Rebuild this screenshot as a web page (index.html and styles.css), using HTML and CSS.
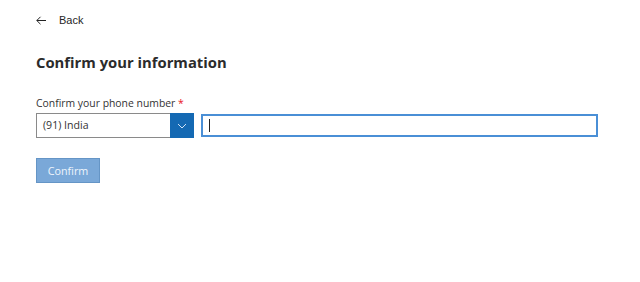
FILE: index.html
```html
<!DOCTYPE html>
<html>
<head>
<meta charset="utf-8">
<link rel="stylesheet" href="styles.css">
</head>
<body>
<div class="page">
  <div class="back">
    <svg class="back-icon" width="10" height="9" viewBox="0 0 10 9"><path d="M4.5 0.8 L0.8 4.5 L4.5 8.2 M0.8 4.5 H10" fill="none" stroke="#222" stroke-width="1"/></svg>
    <span class="back-text">Back</span>
  </div>
  <h1 class="title">Confirm your information</h1>
  <div class="label">Confirm your phone number <span class="req">*</span></div>
  <div class="row">
    <div class="select">
      <span class="select-text">(91) India</span>
      <span class="select-btn"><svg width="10" height="6" viewBox="0 0 10 6"><path d="M1 1 L5 5 L9 1" fill="none" stroke="#cfe2f5" stroke-width="1"/></svg></span>
    </div>
    <div class="input"><span class="caret"></span></div>
  </div>
  <button class="confirm">Confirm</button>
</div>
</body>
</html>
```

FILE: styles.css
```css
html, body { margin: 0; padding: 0; background: #fff; }
body { font-family: "Open Sans", "Noto Sans", sans-serif; color: #262626; }
.page { padding: 12px 36px 0 36px; }
.back { display: flex; align-items: center; height: 16px; }
.back-icon { margin-right: 13px; }
.back-text { font-family: "Liberation Sans", Arial, sans-serif; font-size: 11px; color: #262626; }
.title { margin: 23px 0 0 0; font-size: 14.8px; font-weight: 700; line-height: 22px; color: #2b2b2b; }
.label { margin-top: 22px; font-size: 10.4px; line-height: 16px; color: #333; }
.req { color: #e81123; }
.row { display: flex; align-items: center; margin-top: 2px; height: 25px; }
.select { width: 158px; height: 25px; box-sizing: border-box; border: 1px solid #8a8a8a; display: flex; justify-content: space-between; align-items: stretch; }
.select-text { font-size: 10.6px; line-height: 23px; padding-left: 6px; color: #333; }
.select-btn { width: 24px; background: #1469b3; display: flex; align-items: center; justify-content: center; margin: -1px -1px -1px 0; }
.input { margin-left: 7px; width: 397px; height: 23px; box-sizing: border-box; border: 2px solid #4a8fd6; display: flex; align-items: center; padding-left: 6px; }
.caret { width: 1px; height: 13px; background: #222; }
.confirm { display: block; margin-top: 20px; width: 64px; height: 25px; background: #7aa8d8; border: 1px solid #6595c6; color: #eef5fc; font-family: "Open Sans", sans-serif; font-size: 10.8px; padding: 0; }
```
